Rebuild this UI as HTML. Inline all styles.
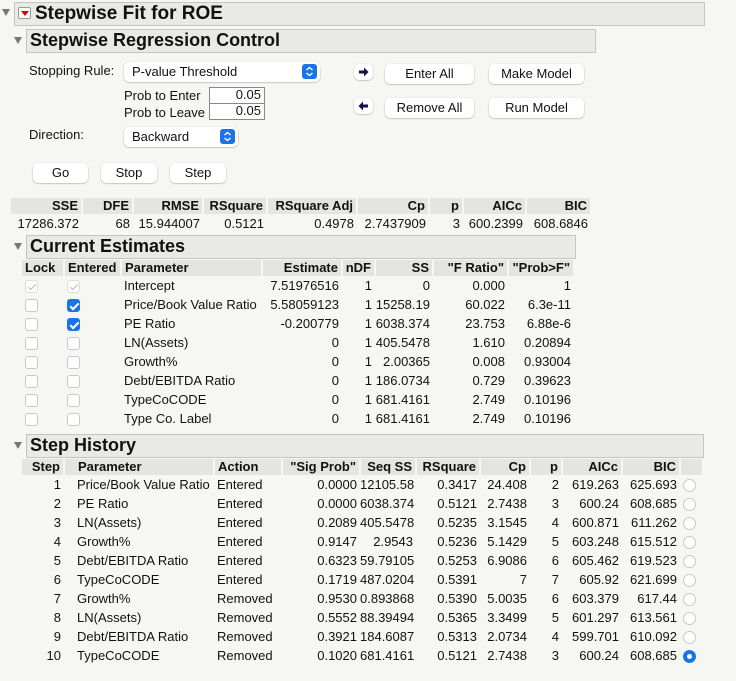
<!DOCTYPE html>
<html><head><meta charset="utf-8"><style>
body{margin:0;width:736px;height:681px;background:#f6f6f2;font-family:"Liberation Sans",sans-serif;font-size:13px;color:#111;position:relative;overflow:hidden}
.a{position:absolute}
.bar{position:absolute;background:#e9e9e5;border:1px solid #c4c4c0;box-sizing:border-box;font-weight:bold;font-size:18px;padding-left:3px;line-height:21px}
.tri{position:absolute;width:0;height:0;border-left:4px solid transparent;border-right:4px solid transparent;border-top:7px solid #777}
.btn{position:absolute;background:#fff;border-radius:5px;box-shadow:0 0.5px 1.5px rgba(0,0,0,.35);text-align:center;line-height:20px;font-size:13px}
.pop{position:absolute;background:#fff;border-radius:5px;box-shadow:0 0.5px 1.5px rgba(0,0,0,.35);line-height:19px;padding-left:8px;box-sizing:border-box}
.pop svg{position:absolute;right:3px;top:2px}
.inp{position:absolute;background:#fff;border:1px solid #888;box-sizing:border-box;text-align:right;padding-right:3px;line-height:14px}
table{position:absolute;border-collapse:collapse;table-layout:fixed}
td{padding:0 3px 0 0;text-align:right;white-space:nowrap;height:19px;overflow:hidden}
tr.h td{background:#e4e4e0;font-weight:bold;border-right:2px solid #f6f6f2;height:16px;line-height:16px}
.l{text-align:left;padding-left:3px}
.cb{display:inline-block;width:13px;height:13px;border:1px solid #c8c8c8;border-radius:3px;background:#fff;vertical-align:middle;box-sizing:border-box;position:relative}
.cb.on{background:#1a73e8;border-color:#1a73e8}
.cb.on:after,.cb.dis:after{content:"";position:absolute;left:3.5px;top:0.5px;width:3px;height:7px;border:solid #fff;border-width:0 2px 2px 0;transform:rotate(45deg)}
.cb.dis{border-color:#ddd}
.cb.dis:after{border-color:#bbb;border-width:0 1.5px 1.5px 0}
.rd{display:inline-block;width:13px;height:13px;border:1px solid #c8c8c8;border-radius:50%;background:#fff;box-sizing:border-box;vertical-align:middle}
.rd.on{border:4px solid #1a73e8}
</style></head><body>
<div class="tri" style="left:2px;top:9px"></div>
<div class="bar" style="left:14px;top:2px;width:691px;height:24px;font-size:19px;padding-left:20px;line-height:22px">Stepwise Fit for ROE</div>
<div class="a" style="left:18px;top:7px;width:11px;height:10px;border:1px solid #999;background:#fff;border-radius:2px"><div style="position:absolute;left:2px;top:3px;border-left:4px solid transparent;border-right:4px solid transparent;border-top:5px solid #d00"></div></div>
<div class="tri" style="left:14px;top:37px"></div>
<div class="bar" style="left:26px;top:29px;width:570px;height:24px">Stepwise Regression Control</div>

<div class="a" style="left:29px;top:63px">Stopping Rule:</div>
<div class="pop" style="left:124px;top:62px;width:196px;height:20px">P-value Threshold<svg width="15" height="15" viewBox="0 0 15 15"><rect width="15" height="15" rx="3" fill="#1a73e8"/><path d="M4.5 6 L7.5 3.5 L10.5 6 M4.5 9 L7.5 11.5 L10.5 9" stroke="#fff" stroke-width="1.4" fill="none"/></svg></div>
<div class="a" style="left:124px;top:88px">Prob to Enter</div>
<div class="inp" style="left:209px;top:87px;width:56px;height:17px">0.05</div>
<div class="a" style="left:124px;top:105px">Prob to Leave</div>
<div class="inp" style="left:209px;top:103px;width:56px;height:17px">0.05</div>
<div class="a" style="left:29px;top:127px">Direction:</div>
<div class="pop" style="left:124px;top:127px;width:114px;height:20px">Backward<svg width="15" height="15" viewBox="0 0 15 15"><rect width="15" height="15" rx="3" fill="#1a73e8"/><path d="M4.5 6 L7.5 3.5 L10.5 6 M4.5 9 L7.5 11.5 L10.5 9" stroke="#fff" stroke-width="1.4" fill="none"/></svg></div>
<div class="btn" style="left:33px;top:163px;width:55px">Go</div>
<div class="btn" style="left:101px;top:163px;width:56px">Stop</div>
<div class="btn" style="left:170px;top:163px;width:56px">Step</div>

<div class="btn" style="left:354px;top:64px;width:19px;height:16px"><svg width="19" height="16" viewBox="0 0 19 16"><path d="M5 6.5 H10 V3.5 L14.5 8 L10 12.5 V9.5 H5 Z" fill="#10104a"/></svg></div>
<div class="btn" style="left:354px;top:98px;width:19px;height:16px"><svg width="19" height="16" viewBox="0 0 19 16"><path d="M14 6.5 H9 V3.5 L4.5 8 L9 12.5 V9.5 H14 Z" fill="#10104a"/></svg></div>
<div class="btn" style="left:385px;top:64px;width:89px">Enter All</div>
<div class="btn" style="left:489px;top:64px;width:95px">Make Model</div>
<div class="btn" style="left:385px;top:98px;width:89px">Remove All</div>
<div class="btn" style="left:489px;top:98px;width:95px">Run Model</div>

<table style="left:11px;top:198px;width:580px">
<colgroup><col style="width:71px"><col style="width:51px"><col style="width:70px"><col style="width:64px"><col style="width:90px"><col style="width:72px"><col style="width:34px"><col style="width:63px"><col style="width:65px"></colgroup>
<tr class="h"><td>SSE</td><td>DFE</td><td>RMSE</td><td>RSquare</td><td>RSquare Adj</td><td>Cp</td><td>p</td><td>AICc</td><td>BIC</td></tr>
<tr><td>17286.372</td><td>68</td><td>15.944007</td><td>0.5121</td><td>0.4978</td><td>2.7437909</td><td>3</td><td>600.2399</td><td>608.6846</td></tr>
</table>

<div class="tri" style="left:14px;top:243px"></div>
<div class="bar" style="left:26px;top:235px;width:550px;height:24px">Current Estimates</div>
<table style="left:22px;top:260px;width:552px">
<colgroup><col style="width:42px"><col style="width:57px"><col style="width:141px"><col style="width:80px"><col style="width:33px"><col style="width:58px"><col style="width:75px"><col style="width:66px"></colgroup>
<tr class="h"><td class="l">Lock</td><td class="l">Entered</td><td class="l">Parameter</td><td>Estimate</td><td>nDF</td><td>SS</td><td>"F Ratio"</td><td>"Prob&gt;F"</td></tr>
<tr><td class="l"><span class="cb dis"></span></td><td class="l"><span class="cb dis"></span></td><td class="l">Intercept</td><td>7.51976516</td><td>1</td><td>0</td><td>0.000</td><td>1</td></tr>
<tr><td class="l"><span class="cb"></span></td><td class="l"><span class="cb on"></span></td><td class="l">Price/Book Value Ratio</td><td>5.58059123</td><td>1</td><td>15258.19</td><td>60.022</td><td>6.3e-11</td></tr>
<tr><td class="l"><span class="cb"></span></td><td class="l"><span class="cb on"></span></td><td class="l">PE Ratio</td><td>-0.200779</td><td>1</td><td>6038.374</td><td>23.753</td><td>6.88e-6</td></tr>
<tr><td class="l"><span class="cb"></span></td><td class="l"><span class="cb"></span></td><td class="l">LN(Assets)</td><td>0</td><td>1</td><td>405.5478</td><td>1.610</td><td>0.20894</td></tr>
<tr><td class="l"><span class="cb"></span></td><td class="l"><span class="cb"></span></td><td class="l">Growth%</td><td>0</td><td>1</td><td>2.00365</td><td>0.008</td><td>0.93004</td></tr>
<tr><td class="l"><span class="cb"></span></td><td class="l"><span class="cb"></span></td><td class="l">Debt/EBITDA Ratio</td><td>0</td><td>1</td><td>186.0734</td><td>0.729</td><td>0.39623</td></tr>
<tr><td class="l"><span class="cb"></span></td><td class="l"><span class="cb"></span></td><td class="l">TypeCoCODE</td><td>0</td><td>1</td><td>681.4161</td><td>2.749</td><td>0.10196</td></tr>
<tr><td class="l"><span class="cb"></span></td><td class="l"><span class="cb"></span></td><td class="l">Type Co. Label</td><td>0</td><td>1</td><td>681.4161</td><td>2.749</td><td>0.10196</td></tr>
</table>

<div class="tri" style="left:14px;top:442px"></div>
<div class="bar" style="left:26px;top:434px;width:678px;height:24px">Step History</div>
<table style="left:22px;top:459px;width:681px">
<colgroup><col style="width:42px"><col style="width:150px"><col style="width:68px"><col style="width:78px"><col style="width:56px"><col style="width:64px"><col style="width:50px"><col style="width:32px"><col style="width:60px"><col style="width:58px"><col style="width:23px"></colgroup>
<tr class="h"><td>Step</td><td class="l" style="padding-left:13px">Parameter</td><td class="l">Action</td><td>"Sig Prob"</td><td>Seq SS</td><td>RSquare</td><td>Cp</td><td>p</td><td>AICc</td><td>BIC</td><td></td></tr>
<tr><td>1</td><td class="l" style="padding-left:13px">Price/Book Value Ratio</td><td class="l">Entered</td><td>0.0000</td><td>12105.58</td><td>0.3417</td><td>24.408</td><td>2</td><td>619.263</td><td>625.693</td><td class="l"><span class="rd"></span></td></tr>
<tr><td>2</td><td class="l" style="padding-left:13px">PE Ratio</td><td class="l">Entered</td><td>0.0000</td><td>6038.374</td><td>0.5121</td><td>2.7438</td><td>3</td><td>600.24</td><td>608.685</td><td class="l"><span class="rd"></span></td></tr>
<tr><td>3</td><td class="l" style="padding-left:13px">LN(Assets)</td><td class="l">Entered</td><td>0.2089</td><td>405.5478</td><td>0.5235</td><td>3.1545</td><td>4</td><td>600.871</td><td>611.262</td><td class="l"><span class="rd"></span></td></tr>
<tr><td>4</td><td class="l" style="padding-left:13px">Growth%</td><td class="l">Entered</td><td>0.9147</td><td>2.9543</td><td>0.5236</td><td>5.1429</td><td>5</td><td>603.248</td><td>615.512</td><td class="l"><span class="rd"></span></td></tr>
<tr><td>5</td><td class="l" style="padding-left:13px">Debt/EBITDA Ratio</td><td class="l">Entered</td><td>0.6323</td><td>59.79105</td><td>0.5253</td><td>6.9086</td><td>6</td><td>605.462</td><td>619.523</td><td class="l"><span class="rd"></span></td></tr>
<tr><td>6</td><td class="l" style="padding-left:13px">TypeCoCODE</td><td class="l">Entered</td><td>0.1719</td><td>487.0204</td><td>0.5391</td><td>7</td><td>7</td><td>605.92</td><td>621.699</td><td class="l"><span class="rd"></span></td></tr>
<tr><td>7</td><td class="l" style="padding-left:13px">Growth%</td><td class="l">Removed</td><td>0.9530</td><td>0.893868</td><td>0.5390</td><td>5.0035</td><td>6</td><td>603.379</td><td>617.44</td><td class="l"><span class="rd"></span></td></tr>
<tr><td>8</td><td class="l" style="padding-left:13px">LN(Assets)</td><td class="l">Removed</td><td>0.5552</td><td>88.39494</td><td>0.5365</td><td>3.3499</td><td>5</td><td>601.297</td><td>613.561</td><td class="l"><span class="rd"></span></td></tr>
<tr><td>9</td><td class="l" style="padding-left:13px">Debt/EBITDA Ratio</td><td class="l">Removed</td><td>0.3921</td><td>184.6087</td><td>0.5313</td><td>2.0734</td><td>4</td><td>599.701</td><td>610.092</td><td class="l"><span class="rd"></span></td></tr>
<tr><td>10</td><td class="l" style="padding-left:13px">TypeCoCODE</td><td class="l">Removed</td><td>0.1020</td><td>681.4161</td><td>0.5121</td><td>2.7438</td><td>3</td><td>600.24</td><td>608.685</td><td class="l"><span class="rd on"></span></td></tr>
</table>
</body></html>
